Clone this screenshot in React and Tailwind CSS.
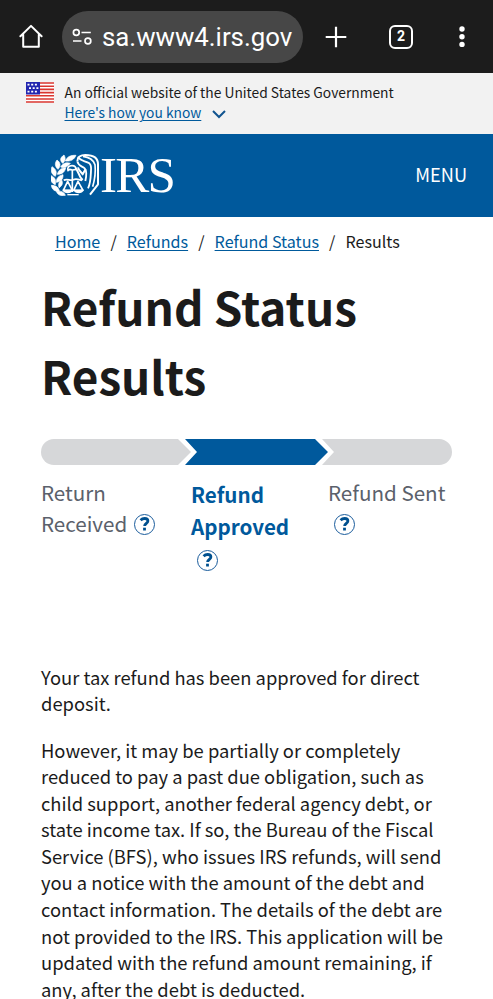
const breadcrumbs = ['Home', 'Refunds', 'Refund Status'];

const approvedLines = ['Your tax refund has been approved for direct', 'deposit.'];

const offsetLines = [
  'However, it may be partially or completely',
  'reduced to pay a past due obligation, such as',
  'child support, another federal agency debt, or',
  'state income tax. If so, the Bureau of the Fiscal',
  'Service (BFS), who issues IRS refunds, will send',
  'you a notice with the amount of the debt and',
  'contact information. The details of the debt are',
  'not provided to the IRS. This application will be',
  'updated with the refund amount remaining, if',
  'any, after the debt is deducted.',
];

function BrowserBar() {
  return (
    <div className="flex h-[73px] items-center bg-[#1c1c1c] font-['Roboto',sans-serif] text-white">
      <svg className="ml-[19px] shrink-0" width="24" height="26" viewBox="0 0 24 26" fill="none" stroke="#fff" strokeWidth="2" strokeLinejoin="round" strokeLinecap="round">
        <path d="M1.4 12.3 12 1.9l10.6 10.4M4.2 10.5v12.3h15.6V10.5" />
      </svg>
      <div className="ml-[19px] flex h-[52px] w-[241px] items-center rounded-full bg-[#474747] pl-[10px]">
        <svg className="shrink-0" width="21" height="18" viewBox="0 0 21 18" fill="none" stroke="#fff" strokeWidth="1.7">
          <circle cx="4.3" cy="4.5" r="2.9" />
          <path d="M9.5 4.5h9.3M1 13H9.5" />
          <circle cx="15.9" cy="13" r="2.9" />
        </svg>
        <span className="ml-[9px] text-[25.8px] leading-8 whitespace-nowrap">sa.www4.irs.gov</span>
      </div>
      <svg className="ml-[22px] shrink-0" width="22" height="22" viewBox="0 0 22 22" stroke="#fff" strokeWidth="2.2">
        <path d="M11 .7v20.6M.7 11h20.6" />
      </svg>
      <div className="ml-[42px] flex h-6 w-6 items-center justify-center rounded-[6px] border-2 border-white text-[14px] font-bold">2</div>
      <svg className="ml-[46px] shrink-0" width="6" height="22" viewBox="0 0 6 22" fill="#fff">
        <circle cx="3" cy="3" r="2.7" />
        <circle cx="3" cy="10.7" r="2.7" />
        <circle cx="3" cy="18.4" r="2.7" />
      </svg>
    </div>
  );
}

function Flag() {
  return (
    <svg className="mt-[9px] shrink-0" width="28" height="21" viewBox="0 0 28 21">
      <rect width="28" height="21" fill="#fff" />
      <path d="M0 1h28M0 4.2h28M0 7.4h28M0 10.6h28M0 13.8h28M0 17h28M0 20h28" stroke="#d9362f" strokeWidth="1.6" />
      <rect width="14" height="12.5" fill="#2326b0" />
      <path d="M1.5 2.7h11M3 6.2h9.5M1.5 9.7h11" stroke="#fff" strokeWidth="1.8" strokeDasharray="2 1.7" />
    </svg>
  );
}

function GovBanner() {
  return (
    <div className="flex h-[61px] bg-[#f2f2f2] pl-[26px]">
      <Flag />
      <div className="ml-[10.5px] pt-[9px] text-[13.8px] leading-5 whitespace-nowrap">
        <p>An official website of the United States Government</p>
        <p className="flex items-center text-[#005a9c]">
          <a className="underline underline-offset-2">Here's how you know</a>
          <svg className="mt-1 ml-[11px]" width="14" height="9" viewBox="0 0 14 9" fill="none" stroke="#11548f" strokeWidth="2">
            <path d="m1 1 6 6 6-6" />
          </svg>
        </p>
      </div>
    </div>
  );
}

function Emblem() {
  return (
    <svg width="48" height="42" viewBox="9 12 144 126" fill="none" stroke="#fff" strokeLinejoin="round">
      {/* laurel branch */}
      <g fill="#fff" strokeWidth="2">
        <path d="M52 33c5-13 17-18 32-17-5 12-15 19-32 17z" />
        <path d="M44 40c-9-9-8-17 4-25 6 10 4 18-4 25z" />
        <path d="M38 51c7-12 17-15 29-11-8 11-18 15-29 11z" />
        <path d="M30 58c-10-9-10-19-3-28 11 8 12 18 3 28z" />
        <path d="M28 73c3-13 12-19 25-20-2 13-11 20-25 20z" />
        <path d="M22 79c-12-7-15-17-10-29 12 7 16 17 10 29z" />
        <path d="M25 97c0-13 7-20 20-23 1 13-6 21-20 23z" />
        <path d="M22 104c-12-4-16-14-12-27 11 5 15 14 12 27z" />
        <path d="M34 124c-14 1-22-5-24-18 14 0 22 6 24 18z" />
        <path d="M33 113c-3-12 0-18 8-23 5 10 1 18-8 23z" />
        <path d="M52 136c-14 3-23-1-27-12 13-2 23 1 27 12z" />
      </g>
      {/* scales */}
      <path d="M73 60v66M47 91c11-6 20 3 29-2 9-4 17 0 26 2" strokeWidth="5" />
      <path d="m59 94-13 27h27L59 94zm31 0-13 27h28L90 94z" strokeWidth="5" />
      <path d="M43 119h32c-4 14-27 14-32 0zm33 0h32c-5 14-27 14-32 0z" fill="#fff" stroke="none" />
      <path d="M58 134h34" strokeWidth="4" />
      {/* eagle */}
      <path d="M60 62c-3-10 3-15 12-15 8 0 12 4 12 11l-10 2-9-2z" strokeWidth="5" />
      <path d="M83 55c8 6 8 23 21 35" strokeWidth="6" />
      <path d="M88 34c0-12 10-19 24-19 24 0 38 9 38 28v60l-24 31" strokeWidth="6" />
      <path d="M90 20c6 14 23 12 34 20 6 5 6 12 5 22-1 20-1 38-9 53" strokeWidth="5.5" />
      <path d="M105 19c17 2 31 10 36 25 2 20 0 43-7 66" strokeWidth="5" />
      <path d="M88 34c3 15 15 14 22 21 8 8 5 24 2 38" strokeWidth="5.5" />
      <path d="M90 52c2 10 10 14 14 21l9-16" strokeWidth="6" />
    </svg>
  );
}

function SiteHeader() {
  return (
    <header className="flex h-[83px] items-center justify-between bg-[#00599c] pr-[26px] pb-[2px] pl-[51px] text-white">
      <div className="flex items-center">
        <Emblem />
        <span className="ml-px font-['Liberation_Serif',serif] text-[51px] leading-[50px] tracking-[-1.8px]">IRS</span>
      </div>
      <span className="text-[18.2px]">MENU</span>
    </header>
  );
}

function HelpIcon({ className }) {
  return (
    <span className={`inline-flex h-[21px] w-[21px] items-center justify-center rounded-full border-[1.5px] border-[#1a5c9c] text-[#00508f] ${className}`}>
      <svg width="11" height="14" viewBox="0 0 11 14" fill="none" stroke="currentColor" strokeWidth="2.8">
        <path d="M1.6 3.3C3 1.8 4.2 1.5 5.6 1.5c2 0 3.3 1 3.3 2.6 0 2.2-3.3 2.4-3.3 5" />
        <path d="M5.5 10.7v2.8" />
      </svg>
    </span>
  );
}

function ProgressSteps() {
  return (
    <div className="mt-[29px]">
      <svg className="block" width="411" height="26" viewBox="0 0 411 26">
        <path d="M13 0h124l13 13-13 13H13a13 13 0 0 1 0-26z" fill="#d6d7d9" />
        <path d="M144 0h130l13 13-13 13H144l12-13z" fill="#00599c" />
        <path d="M281 0h117a13 13 0 0 1 0 26H281l12-13z" fill="#d6d7d9" />
      </svg>
      <div className="flex h-[199px] pt-3 text-[20.6px] leading-[31px] text-[#5b616b]">
        <div className="w-[150px]">
          <p>Return</p>
          <p className="flex items-center">Received<HelpIcon className="mt-px ml-[7px]" /></p>
        </div>
        <div className="w-[137px] pt-px leading-8 font-bold text-[#00599c]">
          <p>Refund</p>
          <p>Approved</p>
          <p className="flex h-8 items-center"><HelpIcon className="mt-[4px] ml-[6px]" /></p>
        </div>
        <div className="whitespace-nowrap">
          <p>Refund Sent</p>
          <p className="flex h-[31px] items-center"><HelpIcon className="mt-px ml-[6px]" /></p>
        </div>
      </div>
    </div>
  );
}

function Paragraph({ lines, className }) {
  return (
    <p className={`text-[18.38px] leading-[26.55px] whitespace-nowrap ${className}`}>
      {lines.map((line) => (
        <span key={line} className="block">{line}</span>
      ))}
    </p>
  );
}

export default function App() {
  return (
    <div className="h-[999px] w-[493px] overflow-hidden bg-white font-['Noto_Sans_CJK_SC',sans-serif] text-[#1b1b1b]">
      <BrowserBar />
      <GovBanner />
      <SiteHeader />
      <nav className="flex h-[48px] items-center pl-[55px] text-[16.1px]">
        {breadcrumbs.map((label) => (
          <span key={label}>
            <a className="text-[#005a9c] underline underline-offset-2">{label}</a>
            <span className="mx-[10.1px]">/</span>
          </span>
        ))}
        <span>Results</span>
      </nav>
      <main className="pl-[41px]">
        <h1 className="mt-[7px] text-[45.9px] leading-[69px] font-bold">
          Refund Status
          <br />
          Results
        </h1>
        <ProgressSteps />
        <Paragraph className="-mt-[0.4px]" lines={approvedLines} />
        <Paragraph className="mt-[20px]" lines={offsetLines} />
      </main>
    </div>
  );
}
